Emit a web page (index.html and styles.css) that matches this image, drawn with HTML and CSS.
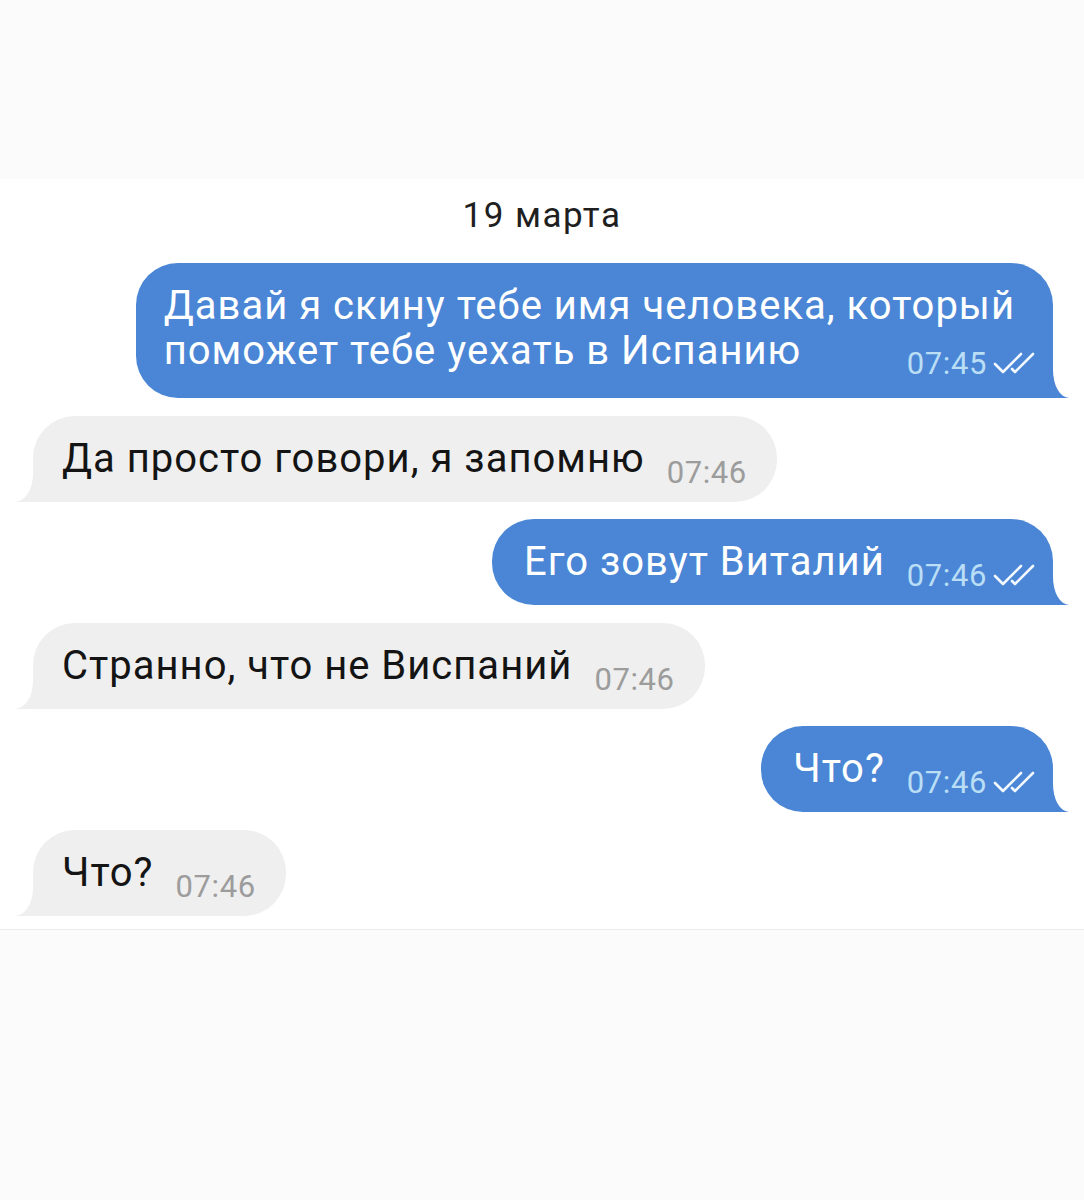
FILE: index.html
```html
<!DOCTYPE html>
<html lang="ru">
<head>
<meta charset="utf-8">
<title>Чат</title>
<link rel="stylesheet" href="styles.css">
</head>
<body>
<div class="top"></div>
<main class="chat">
  <div class="date">19 марта</div>
  <div class="messages">
    <div class="bubble out wide">Давай я скину тебе имя человека, который<br>поможет тебе уехать в Испанию<span class="meta float">07:45<svg class="checks" viewBox="0 0 44 22"><path d="M2 12 L10 20 L28 2"/><path d="M19 17 L22 20 L40 2"/></svg></span></div>
    <div class="bubble in">Да просто говори, я запомню<span class="meta">07:46</span></div>
    <div class="bubble out">Его зовут Виталий<span class="meta">07:46<svg class="checks" viewBox="0 0 44 22"><path d="M2 12 L10 20 L28 2"/><path d="M19 17 L22 20 L40 2"/></svg></span></div>
    <div class="bubble in">Странно, что не Виспаний<span class="meta">07:46</span></div>
    <div class="bubble out">Что?<span class="meta">07:46<svg class="checks" viewBox="0 0 44 22"><path d="M2 12 L10 20 L28 2"/><path d="M19 17 L22 20 L40 2"/></svg></span></div>
    <div class="bubble in">Что?<span class="meta">07:46</span></div>
  </div>
</main>
<div class="bottom"></div>
</body>
</html>
```
FILE: styles.css
```css
html, body {
  margin: 0;
  padding: 0;
}
body {
  background: #ffffff;
  font-family: Roboto, "Noto Sans", "DejaVu Sans", sans-serif;
  width: 1084px;
  height: 1200px;
  display: flex;
  flex-direction: column;
  overflow: hidden;
}
.top {
  height: 179px;
  background: #fbfbfb;
  flex: none;
}
.chat {
  background: #ffffff;
  padding: 18px 0 13px;
  display: flex;
  flex-direction: column;
}
.date {
  text-align: center;
  font-size: 35px;
  line-height: 38px;
  letter-spacing: 1.5px;
  color: #1f1f1f;
  margin-bottom: 28px;
}
.messages {
  display: flex;
  flex-direction: column;
  gap: 17.5px;
}
.bubble {
  position: relative;
  font-size: 40px;
  letter-spacing: 1px;
  line-height: 45px;
  padding: 20px 30px 21px 29px;
}
.bubble.out {
  align-self: flex-end;
  margin-right: 31px;
  background: #4a86d5;
  color: #ffffff;
  border-radius: 42px 42px 0 42px;
  padding-right: 16px;
  padding-left: 32px;
  padding-bottom: 19px;
}
.bubble.out.wide {
  padding-left: 28px;
  padding-right: 38px;
  padding-bottom: 21px;
}
.bubble.in {
  align-self: flex-start;
  margin-left: 33px;
  background: #efefef;
  color: #141414;
  border-radius: 42px 42px 42px 0;
}
.bubble::before,
.bubble::after {
  content: "";
  position: absolute;
  bottom: 0;
  height: 30px;
}
.bubble.out::before {
  right: -16px;
  width: 17px;
  background: #4a86d5;
}
.bubble.out::after {
  right: -28px;
  width: 28px;
  background: #ffffff;
  border-bottom-left-radius: 16px 28px;
}
.bubble.in::before {
  left: -18px;
  width: 19px;
  background: #efefef;
}
.bubble.in::after {
  left: -30px;
  width: 30px;
  background: #ffffff;
  border-bottom-right-radius: 18px 28px;
}
.meta {
  display: inline-block;
  font-size: 31px;
  letter-spacing: 0.6px;
  line-height: 0;
  vertical-align: -11px;
  margin-left: 22px;
  white-space: nowrap;
}
.in .meta {
  color: #9c9c9c;
}
.out .meta {
  color: #b9def6;
}
.meta.float {
  float: right;
  line-height: 45px;
  margin: 13px -22px -9px 22px;
}
.checks {
  width: 44px;
  height: 22px;
  margin: 0 0 0 6px;
  vertical-align: 0;
  fill: none;
  stroke: #f2f8ff;
  stroke-width: 2.6;
  stroke-linecap: round;
  stroke-linejoin: round;
}
.bottom {
  flex: 1;
  background: #fbfbfb;
  border-top: 1px solid #ececec;
}
```
